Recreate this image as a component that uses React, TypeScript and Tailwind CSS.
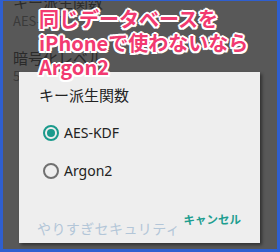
import React from "react";

const jp = { fontFamily: '"Noto Sans CJK JP", "Noto Sans", sans-serif' };

export default function App() {
  return (
    <div className="w-[280px] h-[252px] bg-[#2f5fd0] pt-px pl-[3px] pr-[3px] pb-[3px]" style={jp}>
      <div className="relative w-full h-full bg-[#585858] overflow-hidden">
        {/* dimmed settings list behind */}
        <div className="flex flex-col pl-[10px] text-[#2a2a2a]">
          <div className="text-[15px] leading-[18px] mt-[-8px]">キー派生関数</div>
          <div className="text-[13px] leading-[16px] mt-[2px] text-[#3a3a3a]">AES-KDF</div>
          <div className="text-[15px] leading-[18px] mt-[20px]">暗号化レベル</div>
          <div className="text-[13px] leading-[16px] mt-[1px] text-[#3a3a3a]">5</div>
        </div>

        {/* dialog */}
        <div className="absolute left-[16px] top-[71px] w-[241px] h-[171px] bg-[#eeeeee] shadow-[2px_2px_3px_rgba(0,0,0,0.45)] flex flex-col">
          <div className="pl-[20px] pt-[13px] text-[15px] leading-[20px] text-[#222]">キー派生関数</div>
          <div className="flex flex-col gap-[22px] pl-[24px] mt-[20px]">
            <div className="flex items-center gap-[5px] h-[16px]">
              <div className="w-[16px] h-[16px] rounded-full border-2 border-[#1a9a8c] flex items-center justify-center">
                <div className="w-[8px] h-[8px] rounded-full bg-[#1a9a8c]" />
              </div>
              <span className="text-[14px] leading-[16px] text-[#222]" style={{ fontFamily: '"Noto Sans", sans-serif' }}>AES-KDF</span>
            </div>
            <div className="flex items-center gap-[5px] h-[16px]">
              <div className="w-[16px] h-[16px] rounded-full border-2 border-[#707070]" />
              <span className="text-[14px] leading-[16px] text-[#222]" style={{ fontFamily: '"Noto Sans", sans-serif' }}>Argon2</span>
            </div>
          </div>
          <div className="flex items-end justify-between mt-auto pb-[6px] pl-[18px] pr-[19px]">
            <span className="text-[14px] leading-[18px] text-[#b3c6d8] tracking-[0.4px]">やりすぎセキュリティ</span>
            <span className="text-[11.5px] leading-[14px] font-bold text-[#1e9e90] mb-[11px]">キャンセル</span>
          </div>
        </div>

        {/* annotation */}
        <div
          className="absolute left-[36px] top-[6px] flex flex-col text-[20px] leading-[24px] font-bold text-[#f23a70] [text-shadow:2px_0_0_#fff,-2px_0_0_#fff,0_2px_0_#fff,0_-2px_0_#fff,1.5px_1.5px_0_#fff,-1.5px_-1.5px_0_#fff,1.5px_-1.5px_0_#fff,-1.5px_1.5px_0_#fff]"
        >
          <span>同じデータベースを</span>
          <span>iPhoneで使わないなら</span>
          <span>Argon2</span>
        </div>
      </div>
    </div>
  );
}
